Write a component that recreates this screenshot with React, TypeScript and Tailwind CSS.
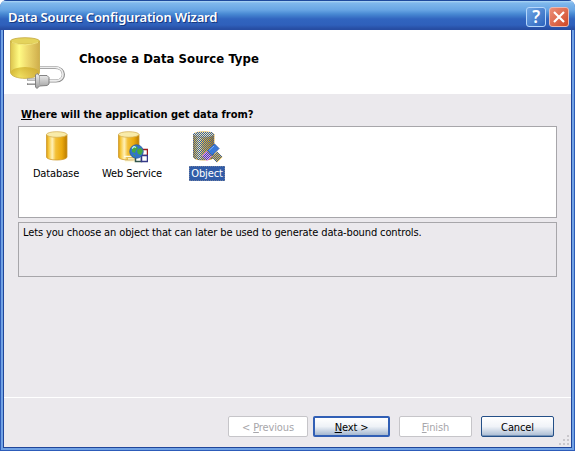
import React from "react";

const ui = "font-['DejaVu_Sans_Condensed','DejaVu_Sans',sans-serif] [font-stretch:condensed]";

function DataSourceIcon() {
  return (
    <svg width="58" height="56" viewBox="8 34 58 56" className="block">
      <defs>
        <linearGradient id="bigBody">
          <stop offset="0" stopColor="#dcc44c" />
          <stop offset=".3" stopColor="#fffb84" />
          <stop offset=".55" stopColor="#f0dc70" />
          <stop offset="1" stopColor="#cfae4c" />
        </linearGradient>
        <linearGradient id="bigFloor" x1="0" y1="0" x2="0" y2="1">
          <stop offset="0" stopColor="#c9a51c" stopOpacity=".65" />
          <stop offset="1" stopColor="#d9b92c" stopOpacity=".35" />
        </linearGradient>
        <linearGradient id="plugBody" x1="0" y1="0" x2="0" y2="1">
          <stop offset="0" stopColor="#f4f4f4" />
          <stop offset="1" stopColor="#9c9c9c" />
        </linearGradient>
      </defs>
      <path d="M10.500 41v31c0 8.500 29 8.500 29 0v-31" fill="url(#bigBody)" stroke="#c5aa3d" strokeWidth=".8" />
      <ellipse cx="25" cy="72.500" rx="14" ry="5.600" fill="url(#bigFloor)" />
      <ellipse cx="25" cy="41" rx="14.500" ry="3.300" fill="#e4d35c" stroke="#c4a73a" strokeWidth=".8" />
      <path d="M12 42.500q13 4.500 26 0" fill="none" stroke="#fff896" strokeWidth=".7" />
      <path d="M40 67.500h15c10.500 0 11.500 13.500 1 13.500h-8" fill="none" stroke="#8e8e8e" strokeWidth="3.200" />
      <path d="M40 67.300h15c10 0 11 13.500 1 13.500h-8" fill="none" stroke="#ededed" strokeWidth="1.700" />
      <path d="M27 79.500h9M27 84h9" stroke="#777" strokeWidth="2.200" />
      <path d="M27.500 79.300h9M27.500 83.800h9" stroke="#e6e6e6" strokeWidth="1" />
      <path d="M35.500 75l1.500-1.500 2.500 2h7.500l2 2v6.500l-2 1.500-7.500.500-2.500 2.500-1.500-1.500z" fill="url(#plugBody)" stroke="#777" strokeWidth=".9" />
      <path d="M39.500 76v10" stroke="#aaa" />
    </svg>
  );
}

function Cylinder({ id }: { id: string }) {
  return (
    <>
      <defs>
        <linearGradient id={id}>
          <stop offset="0" stopColor="#d99a14" />
          <stop offset=".1" stopColor="#f6c63a" />
          <stop offset=".28" stopColor="#fff1b8" />
          <stop offset=".45" stopColor="#f3c038" />
          <stop offset=".75" stopColor="#eba90c" />
          <stop offset="1" stopColor="#ba7b00" />
        </linearGradient>
      </defs>
      <path d="M5.500 3.500v22.500c0 4 20.500 4 20.500 0V3.500" fill={`url(#${id})`} stroke="#cf9a2b" strokeWidth=".8" />
      <ellipse cx="15.750" cy="3.500" rx="10.250" ry="2.800" fill="#f8ebaa" stroke="#d7b258" strokeWidth=".8" />
    </>
  );
}

function DatabaseIcon() {
  return (
    <svg width="32" height="32" viewBox="0 0 32 32" className="block"><Cylinder id="db" /></svg>
  );
}

function WebServiceIcon() {
  return (
    <svg width="32" height="32" viewBox="0 0 32 32" className="block">
      <g transform="translate(-3 0)"><Cylinder id="ws" /></g>
      <path d="M8 25.500h10M12 28h9M9 30.500h10" stroke="#fffbe0" strokeWidth="1.300" />
      <path d="M10 26.500h9M9 29h10" stroke="#d8bd62" strokeWidth=".8" />
      <path d="M25.500 18.500h6v6h-6z" fill="#fff" stroke="#9e1b1b" strokeWidth="1.500" />
      <path d="M19.500 24.500h6v6h-6z" fill="#fff" stroke="#31564c" strokeWidth="1.500" />
      <path d="M25.500 24.500h6v6h-6z" fill="#fff" stroke="#343887" strokeWidth="1.500" />
      <circle cx="20.500" cy="20.500" r="6.800" fill="#3274c8" stroke="#265899" strokeWidth=".7" />
      <path d="M16 17l4-2 2 2-2 2-1 3-3-1zM22 18l3-1 2 3-2 4-3-1-1-3zM17 23l2 1v2z" fill="#47a83f" />
      <path d="M16 17.500l2-2 2 1" fill="none" stroke="#b9efff" strokeWidth="1.300" />
    </svg>
  );
}

// One-pixel checkerboard covering the shape's interior, used for the selection tint.
function checker(inside: (x: number, y: number) => boolean) {
  const cells: [number, number][] = [];
  for (let y = 0; y < 32; y++)
    for (let x = 0; x < 32; x++)
      if ((x + y) % 2 === 1 && inside(x + 0.5, y + 0.5)) cells.push([x, y]);
  return cells;
}

const bodyDither = checker((x, y) => {
  const bow = 3 * Math.sqrt(Math.max(0, 1 - ((x - 12.75) / 10.75) ** 2));
  return x > 2 && x < 23.5 && y > 3.5 - bow && y < 26 + bow;
});
const diamondDither = checker((x, y) => Math.abs(x - 16) + Math.abs(y - 25) < 5 || Math.abs(x - 26) + Math.abs(y - 26) < 5.500);

function Dither({ cells }: { cells: [number, number][] }) {
  return <g fill="#315ca8">{cells.map(([x, y]) => <rect key={`${x}-${y}`} x={x} y={y} width="1" height="1" />)}</g>;
}

function ObjectIcon() {
  return (
    <svg width="32" height="32" viewBox="0 0 32 32" className="block">
      <g transform="translate(-3 0)"><Cylinder id="obj" /></g>
      <Dither cells={bodyDither} />
      <path d="M11 25l5-5 5 5-5 5z" fill="#f08af2" />
      <path d="M20.500 26l5.500-5.500 5.500 5.500-5.500 5.500z" fill="#f0bd38" />
      <Dither cells={diamondDither} />
      <path d="M16.500 19.500l7-6.500 4.500 4.500-7 7z" fill="#3979da" stroke="#315ca8" />
      <path d="M18 19.500l5-4.500" stroke="#85b6f4" />
    </svg>
  );
}

function Choice({ icon, label, selected, className, labelClass = "" }: { icon: React.ReactNode; label: string; selected?: boolean; className: string; labelClass?: string }) {
  return (
    <div className={`flex flex-col items-center ${className}`}>
      {icon}
      <span className={`mt-[3px] h-[15px] px-[2px] leading-[15px] whitespace-nowrap ${labelClass} ${selected ? "w-[36px] bg-[#315ca8] text-center text-white outline-1 -outline-offset-1 outline-dotted outline-[#6f7fa0]" : ""}`}>{label}</span>
    </div>
  );
}

function WizardButton({ children, kind, className }: { children: React.ReactNode; kind: "disabled" | "default" | "normal"; className: string }) {
  const look = {
    disabled: "border border-[#c6c5c9] bg-white text-[#a7a6aa]",
    default: "border-2 border-[#315fb5] bg-linear-to-b from-white via-[#eef2f7] to-[#a5b8d0] text-black",
    normal: "border border-[#244f87] bg-linear-to-b from-white via-[#f0f3f8] to-[#a9bbd2] text-black shadow-[inset_0_-1px_#7895b9]",
  }[kind];
  return <button className={`flex h-[21px] items-center justify-center rounded-[2px] pt-px leading-none ${look} ${className}`}>{children}</button>;
}

export default function App() {
  return (
    <div className={`${ui} flex h-[451px] w-[575px] flex-col overflow-hidden rounded-t-[7px] bg-[#2d5cb9] text-[11px] tracking-[-0.125px] text-black`}>
      <header className="flex h-[30px] shrink-0 items-center border-t border-[#1e4a9d] bg-[linear-gradient(#b0d8f5_0px,#7fb8ec_2px,#68a5e4_9px,#4889d3_13px,#3165bf_18px,#2f60bb_24px,#274da2_28px)] pr-[6px] pl-2">
        <span className="mt-[3px] flex-1 font-['Noto_Sans',sans-serif] text-[13px] leading-4 font-semibold tracking-[-0.16px] text-white [text-shadow:1px_1px_#163a82]">Data Source Configuration Wizard</span>
        <button aria-label="Help" className="mt-[2px] flex size-[20px] items-center justify-center rounded-[3px] border border-[#b5d6fb] bg-linear-to-br from-[#70a7e5] to-[#2d63bd] font-['Noto_Sans',sans-serif] text-[17px] leading-none font-semibold text-white">?</button>
        <button aria-label="Close" className="mt-[2px] ml-[3px] flex size-[20px] items-center justify-center rounded-[3px] border border-[#e9b9b2] bg-linear-to-br from-[#ec8f78] to-[#cf4522]">
          <svg width="14" height="14" viewBox="0 0 14 14"><path d="M2 2l10 10M12 2L2 12" stroke="#fff" strokeWidth="2.200" /></svg>
        </button>
      </header>
      <div className="flex min-h-0 flex-1 border-x border-b border-[#2d5cb9]">
        <div className="flex flex-1 border-x-2 border-b-2 border-[#71a2e4]">
          <div className="flex flex-1 flex-col border-x border-b border-[#20469a] bg-[#ebe9ed]">
            <section className="flex h-[64px] shrink-0 bg-white pt-1 pl-1">
              <DataSourceIcon />
              <h1 className="mt-[16px] ml-[13px] text-[13px] leading-[18px] font-bold tracking-[0.04px] whitespace-nowrap">Choose a Data Source Type</h1>
            </section>
            <main className="flex flex-1 flex-col px-[14px]">
              <h2 className="mt-[14px] ml-[3px] h-[18px] text-[11px] leading-[14px] font-bold tracking-normal"><u>W</u>here will the application get data from?</h2>
              <div className="flex h-[92px] border border-[#a7a6aa] bg-white pt-[4px]">
                <Choice className="ml-[3px] w-[70px]" icon={<DatabaseIcon />} label="Database" labelClass="mr-[2px]" />
                <Choice className="ml-[5px] w-[70px]" icon={<WebServiceIcon />} label="Web Service" />
                <Choice className="ml-[5px] w-[70px]" icon={<ObjectIcon />} label="Object" selected />
              </div>
              <p className="mt-[4px] h-[55px] border border-[#a7a6aa] px-1 pt-[3px] leading-[14px]">Lets you choose an object that can later be used to generate data-bound controls.</p>
            </main>
            <footer className="relative flex h-[50px] shrink-0 border-t border-white pt-[18px] pl-[224px]">
              <WizardButton kind="disabled" className="w-[80px]"><span>&lt; <u>P</u>revious</span></WizardButton>
              <WizardButton kind="default" className="ml-[5px] w-[77px]"><span><u>N</u>ext &gt;</span></WizardButton>
              <WizardButton kind="disabled" className="ml-[9px] w-[73px]"><span><u>F</u>inish</span></WizardButton>
              <WizardButton kind="normal" className="ml-[9px] w-[73px]">Cancel</WizardButton>
              <svg width="12" height="12" className="absolute right-0 bottom-0"><path d="M8 0h2v2H8zM4 4h2v2H4zM8 4h2v2H8zM0 8h2v2H0zM4 8h2v2H4zM8 8h2v2H8z" fill="#c9c7cc" /></svg>
            </footer>
          </div>
        </div>
      </div>
    </div>
  );
}
